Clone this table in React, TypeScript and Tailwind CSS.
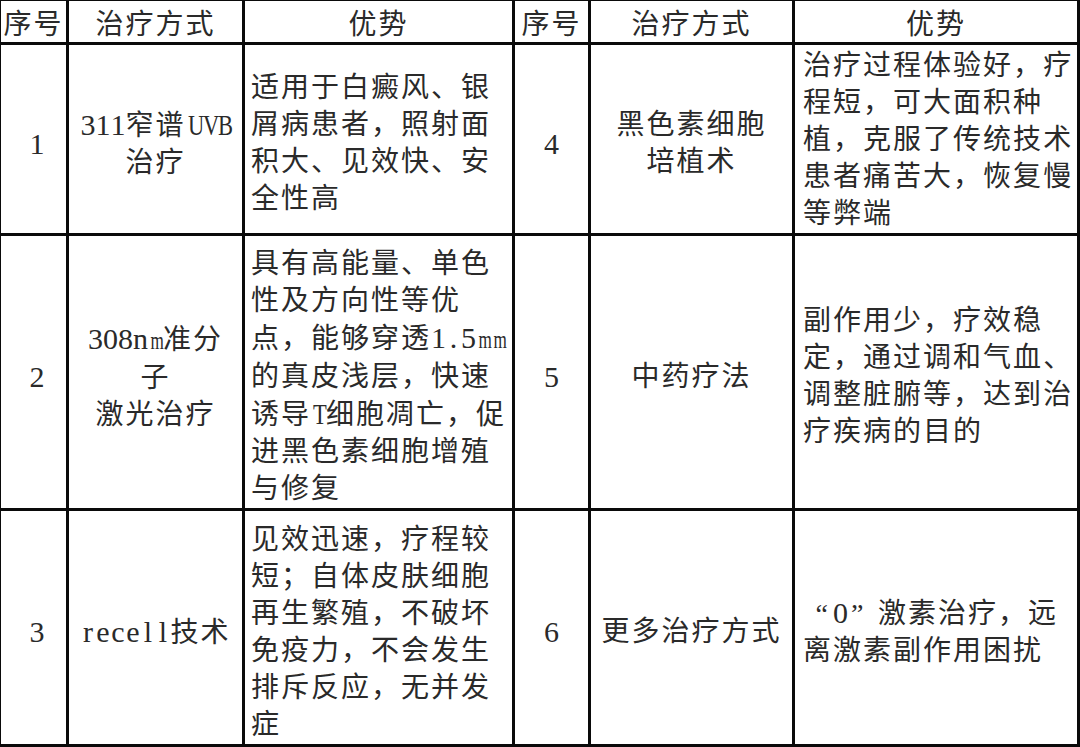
import type { ReactNode } from "react"

type Row = {
    no: string
    method: string[]
    adv: string[]
}

const left: Row[] = [
    {
        no: "1",
        method: ["311窄谱UVB", "治疗"],
        adv: ["适用于白癜风、银", "屑病患者，照射面", "积大、见效快、安", "全性高"],
    },
    {
        no: "2",
        method: ["308nm准分", "子", "激光治疗"],
        adv: [
            "具有高能量、单色",
            "性及方向性等优",
            "点，能够穿透1.5mm",
            "的真皮浅层，快速",
            "诱导T细胞凋亡，促",
            "进黑色素细胞增殖",
            "与修复",
        ],
    },
    {
        no: "3",
        method: ["recell技术"],
        adv: [
            "见效迅速，疗程较",
            "短；自体皮肤细胞",
            "再生繁殖，不破坏",
            "免疫力，不会发生",
            "排斥反应，无并发",
            "症",
        ],
    },
]

const right: Row[] = [
    {
        no: "4",
        method: ["黑色素细胞", "培植术"],
        adv: [
            "治疗过程体验好，疗",
            "程短，可大面积种",
            "植，克服了传统技术",
            "患者痛苦大，恢复慢",
            "等弊端",
        ],
    },
    {
        no: "5",
        method: ["中药疗法"],
        adv: ["副作用少，疗效稳", "定，通过调和气血、", "调整脏腑等，达到治", "疗疾病的目的"],
    },
    {
        no: "6",
        method: ["更多治疗方式"],
        adv: ["“0”激素治疗，远", "离激素副作用困扰"],
    },
]

// the song face puts latin on a half-width pitch, so each latin char gets a 15px box
function latinClass(c: string) {
    if (c === "m") return "text-[26px] scale-x-[0.66]"
    if (/[A-Z]/.test(c)) return "text-[30px] scale-x-[0.75]"
    return "text-[30px]"
}

function Txt({ s }: { s: string }) {
    return (
        <>
            {Array.from(s).map((c, i) => {
                if (c === "“")
                    return (
                        <span key={i} className="inline-block w-[30px] pr-[5px] text-right tracking-[0px]">
                            {c}
                        </span>
                    )
                if (c === "”")
                    return (
                        <span key={i} className="inline-block w-[30px] pl-[3px] text-left tracking-[0px]">
                            {c}
                        </span>
                    )
                if (/[\x21-\x7E]/.test(c))
                    return (
                        <span
                            key={i}
                            className={`inline-block w-[15px] text-center tracking-[0px] ${latinClass(c)}`}
                        >
                            {c}
                        </span>
                    )
                return <span key={i}>{c}</span>
            })}
        </>
    )
}

function Lines({ lines }: { lines: string[] }) {
    return (
        <div className="flex flex-col">
            {lines.map((l, i) => (
                <div key={i} className="whitespace-nowrap">
                    <Txt s={l} />
                </div>
            ))}
        </div>
    )
}

function Center({ children, pad = "" }: { children: ReactNode; pad?: string }) {
    return (
        <div className={`flex items-center justify-center bg-white pt-[8px] text-center ${pad}`}>
            {children}
        </div>
    )
}

function Adv({ lines, pad }: { lines: string[]; pad: string }) {
    return (
        <div className={`flex items-center bg-white ${pad}`}>
            <Lines lines={lines} />
        </div>
    )
}

export default function App() {
    const cells: ReactNode[] = []
    const heads = ["序号", "治疗方式", "优势", "序号", "治疗方式", "优势"]
    heads.forEach((h, i) =>
        cells.push(
            <div
                key={"h" + i}
                className="flex items-center justify-center bg-white pt-[5px] whitespace-nowrap"
            >
                {h}
            </div>
        )
    )
    left.forEach((r, i) => {
        const q = right[i]
        cells.push(
            <Center key={"a" + i} pad="pl-[7px]">
                <Txt s={r.no} />
            </Center>,
            <Center key={"b" + i}>
                <Lines lines={r.method} />
            </Center>,
            <Adv key={"c" + i} lines={r.adv} pad="pl-[6px] pt-[8px]" />,
            <Center key={"d" + i}>
                <Txt s={q.no} />
            </Center>,
            <Center key={"e" + i}>
                <Lines lines={q.method} />
            </Center>,
            <Adv key={"f" + i} lines={q.adv} pad={i === 0 ? "pl-[8px]" : "pl-[8px] pt-[8px]"} />
        )
    })

    return (
        <div className="h-[747px] w-[1080px] overflow-hidden bg-white">
            <div
                className="grid h-[747px] w-[1080px] grid-cols-[65px_173px_267px_73px_201px_282px] grid-rows-[41px_188px_272px_233px] gap-[3px] bg-[#0a0a0a] pt-[1px] pr-[3px] pb-[3px] pl-[1px] font-['Liberation_Serif','Noto_Sans_CJK_SC',serif] text-[28px] leading-[37px] tracking-[2px] text-[#2a2a2a]"
            >
                {cells}
            </div>
        </div>
    )
}
